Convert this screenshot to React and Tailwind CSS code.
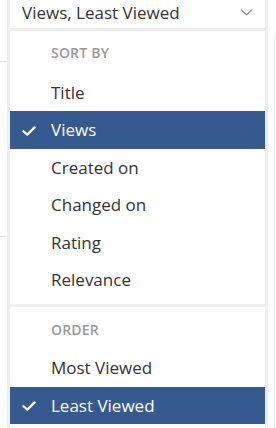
import React from "react";

const sortOptions = [
  { label: "Title" },
  { label: "Views", selected: true },
  { label: "Created on" },
  { label: "Changed on" },
  { label: "Rating" },
  { label: "Relevance" },
];

const orderOptions = [
  { label: "Most Viewed" },
  { label: "Least Viewed", selected: true },
];

function Check() {
  return (
    <svg viewBox="0 0 14 10" className="w-[14px] h-[10px]" fill="none">
      <path d="M1.5 5.2 L5.2 8.6 L12.6 1.4" stroke="white" strokeWidth="2.2" strokeLinecap="round" strokeLinejoin="round" />
    </svg>
  );
}

function Option({ label, selected }) {
  return (
    <div
      className={`h-[37.5px] flex items-center text-[17px] ${
        selected ? "bg-[#355a8f] text-white" : "text-[#333333]"
      }`}
    >
      <span className="w-[41px] pl-[12px] pt-[2px] flex items-center">{selected && <Check />}</span>
      <span>{label}</span>
    </div>
  );
}

function Group({ title, options, first }) {
  return (
    <div className="pb-[5px]">
      <div
        className={`h-[42.5px] flex items-center pl-[41px] text-[14px] font-semibold tracking-[0.2px] text-[#9a9a9a] ${
          first ? "pt-0" : "pt-[3px]"
        }`}
      >
        {title}
      </div>
      {options.map((o) => (
        <Option key={o.label} {...o} />
      ))}
    </div>
  );
}

export default function App() {
  return (
    <div
      className="w-[276px] h-[428px] relative overflow-hidden bg-white"
      style={{ fontFamily: '"Open Sans", "Noto Sans", sans-serif' }}
    >
      {/* page content peeking out behind the menu */}
      <div className="absolute left-0 top-[61px] w-[7px] h-px bg-[#dddddd]" />
      <div className="absolute left-0 top-[236px] w-[7px] h-px bg-[#dddddd]" />
      <div className="absolute left-[274px] top-[35px] w-px h-[400px] bg-[#eeeeee]" />

      <div className="ml-[7px] w-[261px] border-x-[3px] border-[#eeeeee] bg-white relative">
        <div className="h-[28px] flex items-center justify-between px-[12px] text-[17px] text-[#333333]">
          <span className="-mt-[2px]">Views, Least Viewed</span>
          <svg viewBox="0 0 14 8" className="w-[13px] h-[7px] -mt-[4px]" fill="none">
            <path d="M1 1 L7 6.5 L13 1" stroke="#8a8a8a" strokeWidth="1.4" strokeLinecap="round" strokeLinejoin="round" />
          </svg>
        </div>
        <div className="h-[3px] bg-[#eeeeee]" />
        <Group title="SORT BY" options={sortOptions} first />
        <div className="h-[3px] bg-[#eeeeee]" />
        <Group title="ORDER" options={orderOptions} />
      </div>
    </div>
  );
}
